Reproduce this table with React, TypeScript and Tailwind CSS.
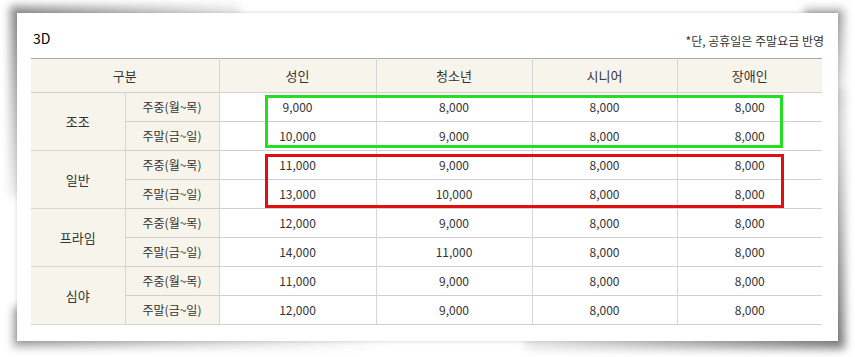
import React from 'react'

type Row = { group: string; day: string; prices: string[] }

const rows: Row[] = [
  { group: '조조', day: '주중(월~목)', prices: ['9,000', '8,000', '8,000', '8,000'] },
  { group: '조조', day: '주말(금~일)', prices: ['10,000', '9,000', '8,000', '8,000'] },
  { group: '일반', day: '주중(월~목)', prices: ['11,000', '9,000', '8,000', '8,000'] },
  { group: '일반', day: '주말(금~일)', prices: ['13,000', '10,000', '8,000', '8,000'] },
  { group: '프라임', day: '주중(월~목)', prices: ['12,000', '9,000', '8,000', '8,000'] },
  { group: '프라임', day: '주말(금~일)', prices: ['14,000', '11,000', '8,000', '8,000'] },
  { group: '심야', day: '주중(월~목)', prices: ['11,000', '9,000', '8,000', '8,000'] },
  { group: '심야', day: '주말(금~일)', prices: ['12,000', '9,000', '8,000', '8,000'] },
]

const heads = ['성인', '청소년', '시니어', '장애인']

export default function App() {
  return (
    <div className="w-[855px] h-[357px] bg-white overflow-hidden pt-[13px] font-['Noto_Sans_CJK_KR',sans-serif] text-[#444]">
      <div className="relative ml-[17px] w-[821px] h-[328px]">
        {/* curled corner shadows */}
        <div className="absolute -left-[7px] -top-[7px] w-[230px] h-[190px] bg-gradient-to-br from-black/45 via-black/10 to-transparent blur-[4px]" />
        <div className="absolute -right-[7px] -bottom-[8px] w-[320px] h-[260px] bg-gradient-to-tl from-black/50 via-black/10 to-transparent blur-[4px]" />
        <div className="absolute -left-[4px] -bottom-[6px] w-[380px] h-[40px] bg-gradient-to-r from-black/35 to-transparent blur-[4px]" />
        <div className="absolute -right-[6px] -top-[4px] w-[40px] h-[120px] bg-gradient-to-b from-black/35 to-transparent blur-[4px]" />

        <div className="relative w-full h-full bg-white shadow-[0_0_4px_rgba(0,0,0,0.18)] px-[14px] pt-[18px]">
          <div className="flex justify-between items-end h-[27px]">
            <span className="text-[14px] leading-[20px] text-black pl-[2px] mb-[10px]">3D</span>
            <span className="text-[12px] leading-[18px] text-[#333] mb-[8px]">*단, 공휴일은 주말요금 반영</span>
          </div>
          <table className="w-[791px] table-fixed border-collapse text-[12px] leading-none">
            <colgroup>
              <col className="w-[94px]" />
              <col className="w-[94px]" />
              <col className="w-[157px]" />
              <col className="w-[156px]" />
              <col className="w-[145px]" />
              <col className="w-[145px]" />
            </colgroup>
            <thead>
              <tr className="h-[34px] bg-[#f7f5eb] border-t border-t-[#a8a8a8]">
                <th colSpan={2} className="font-normal text-[13px] text-[#333] border-r border-[#d6d6d6]">구분</th>
                {heads.map((h, i) => (
                  <th key={h} className={`font-normal text-[13px] text-[#333] ${i < 3 ? 'border-r border-[#d6d6d6]' : ''}`}>{h}</th>
                ))}
              </tr>
            </thead>
            <tbody>
              {rows.map((r, i) => (
                <tr key={i} className="h-[29px] border-t border-[#d0d0d0]">
                  {i % 2 === 0 && (
                    <td rowSpan={2} className="bg-[#f7f5eb] text-center text-[13px] text-[#333] border-r border-b border-[#d6d6d6]">{r.group}</td>
                  )}
                  <td className="bg-[#f7f5eb] text-center text-[#333] border-r border-[#d6d6d6]">{r.day}</td>
                  {r.prices.map((p, j) => (
                    <td key={j} className={`text-center text-[#333] ${j < 3 ? 'border-r border-[#d6d6d6]' : ''}`}>{p}</td>
                  ))}
                </tr>
              ))}
              <tr className="border-t border-[#d0d0d0]"><td colSpan={6} className="h-0 p-0" /></tr>
            </tbody>
          </table>
          <div className="absolute left-[248px] top-[82px] w-[518px] h-[53px] border-[3px] border-[#20e020]" />
          <div className="absolute left-[248px] top-[141px] w-[519px] h-[54px] border-[3px] border-[#e01010]" />
        </div>
      </div>
    </div>
  )
}
